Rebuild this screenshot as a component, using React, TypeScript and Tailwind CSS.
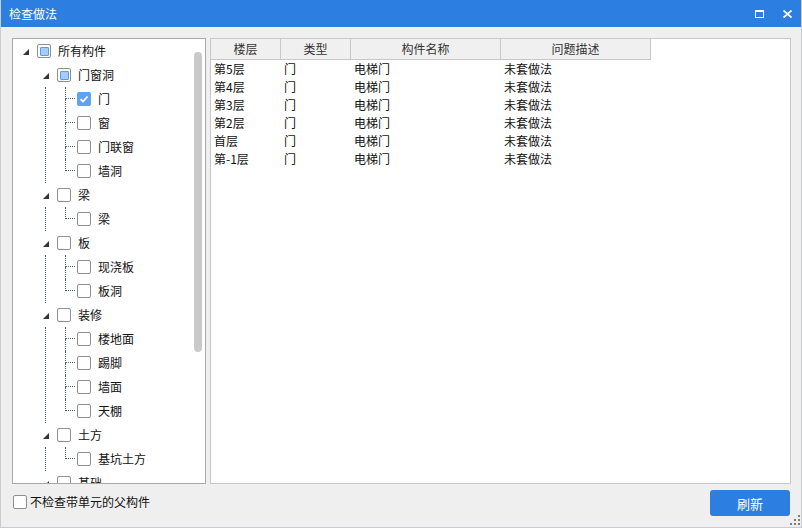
import React from "react";

type Node = { label: string; state?: "checked" | "partial" | "none"; children?: Node[] };

const groups: Node[] = [
  { label: "门窗洞", state: "partial", children: [
    { label: "门", state: "checked" },
    { label: "窗" },
    { label: "门联窗" },
    { label: "墙洞" },
  ] },
  { label: "梁", children: [{ label: "梁" }] },
  { label: "板", children: [{ label: "现浇板" }, { label: "板洞" }] },
  { label: "装修", children: [{ label: "楼地面" }, { label: "踢脚" }, { label: "墙面" }, { label: "天棚" }] },
  { label: "土方", children: [{ label: "基坑土方" }] },
  { label: "基础", children: [] },
];

const rows = [
  ["第5层", "门", "电梯门", "未套做法"],
  ["第4层", "门", "电梯门", "未套做法"],
  ["第3层", "门", "电梯门", "未套做法"],
  ["第2层", "门", "电梯门", "未套做法"],
  ["首层", "门", "电梯门", "未套做法"],
  ["第-1层", "门", "电梯门", "未套做法"],
];

function Check({ state = "none" }: { state?: "checked" | "partial" | "none" }) {
  if (state === "checked") {
    return (
      <div className="w-[14px] h-[14px] shrink-0 rounded-[2px] bg-[#5ea3f1] flex items-center justify-center">
        <svg width="10" height="10" viewBox="0 0 10 10">
          <path d="M1.5 5.2 L4 7.5 L8.5 2.5" fill="none" stroke="white" strokeWidth="1.8" />
        </svg>
      </div>
    );
  }
  if (state === "partial") {
    return (
      <div className="w-[14px] h-[14px] shrink-0 rounded-[2px] border border-[#8f8f8f] bg-white flex items-center justify-center">
        <div className="w-[9px] h-[9px] rounded-[1px] border border-[#5b9be6] bg-[#a4cdf8]" />
      </div>
    );
  }
  return <div className="w-[14px] h-[14px] shrink-0 rounded-[2px] border border-[#8f8f8f] bg-white" />;
}

function Tri() {
  return (
    <svg width="6" height="6" viewBox="0 0 6 6" className="block">
      <polygon points="6,0 6,6 0,6" fill="#333" />
    </svg>
  );
}

export default function App() {
  const font = { fontFamily: '"Noto Sans CJK SC", "Microsoft YaHei", sans-serif' };
  return (
    <div className="relative w-[802px] h-[528px] bg-[#efefef] flex flex-col border-x border-b border-[#c9ccd0] overflow-hidden text-[12px] text-[#111]" style={font}>
      {/* title bar */}
      <div className="h-[27px] shrink-0 bg-[#2c7fe0] flex items-center pl-[9px] -mx-px">
        <span className="text-white text-[12px] leading-none">检查做法</span>
        <div className="ml-auto flex items-center">
          <div className="w-[9px] h-[8px] border border-white border-t-2 mr-[19px]" />
          <svg width="9" height="8" viewBox="0 0 9 8" className="mr-[10px]">
            <path d="M0.5 0.5 L8.5 7.5 M8.5 0.5 L0.5 7.5" stroke="white" strokeWidth="1.7" />
          </svg>
        </div>
      </div>

      {/* panels */}
      <div className="flex pl-[11px] pr-[10px] pt-[11px] gap-[4px]">
        {/* tree */}
        <div className="w-[194px] h-[446px] border border-[#a9a9a9] bg-white flex overflow-hidden">
          <div className="flex-1 overflow-hidden">
            <div className="h-[24px] flex items-center">
              <div className="w-[24px] pl-[10px] pt-[1px]"><Tri /></div>
              <Check state="partial" />
              <span className="ml-[7px] leading-none">所有构件</span>
            </div>
            {groups.map((g, gi) => (
              <div key={gi}>
                <div className="h-[24px] flex items-center">
                  <div className="w-[44px] pl-[30px] pt-[1px]"><Tri /></div>
                  <Check state={g.state} />
                  <span className="ml-[7px] leading-none">{g.label}</span>
                </div>
                <div className="ml-[32px] border-l border-dotted border-[#4e6178]">
                  {g.children!.map((c, ci) => {
                    const last = ci === g.children!.length - 1;
                    return (
                      <div key={ci} className="h-[24px] flex items-center">
                        <div className="ml-[19px] w-[10px] h-full flex flex-col">
                          <div className="h-[12px] border-l border-b border-dotted border-[#4e6178]" />
                          <div className={"h-[12px] " + (last ? "" : "border-l border-dotted border-[#4e6178]")} />
                        </div>
                        <div className="ml-[2px]"><Check state={c.state} /></div>
                        <span className="ml-[7px] leading-none">{c.label}</span>
                      </div>
                    );
                  })}
                </div>
              </div>
            ))}
          </div>
          <div className="w-[8px] mr-[3px] shrink-0">
            <div className="mt-[13px] h-[300px] rounded-[4px] bg-[#c9c9c9]" />
          </div>
        </div>

        {/* table */}
        <div className="flex-1 h-[446px] border border-[#c8c8c8] bg-white overflow-hidden">
          <div className="flex h-[21px] border-b border-[#c8c8c8] w-[440px] bg-[#f0f0f0] text-[#333]">
            <div className="w-[70px] border-r border-[#c8c8c8] flex items-center justify-center leading-none">楼层</div>
            <div className="w-[70px] border-r border-[#c8c8c8] flex items-center justify-center leading-none">类型</div>
            <div className="w-[150px] border-r border-[#c8c8c8] flex items-center justify-center leading-none">构件名称</div>
            <div className="w-[150px] border-r border-[#c8c8c8] flex items-center justify-center leading-none">问题描述</div>
          </div>
          {rows.map((r, i) => (
            <div key={i} className="flex h-[18px] items-center leading-none">
              <div className="w-[70px] pl-[3px]">{r[0]}</div>
              <div className="w-[70px] pl-[3px]">{r[1]}</div>
              <div className="w-[150px] pl-[3px]">{r[2]}</div>
              <div className="w-[150px] pl-[3px]">{r[3]}</div>
            </div>
          ))}
        </div>
      </div>

      {/* bottom */}
      <div className="flex items-start pl-[12px] pr-[11px]">
        <div className="flex items-center mt-[11px]">
          <Check />
          <span className="ml-[3px] leading-none">不检查带单元的父构件</span>
        </div>
        <button className="ml-auto mt-[6px] w-[80px] h-[26px] rounded-[3px] bg-[#2c7fe0] text-white text-[13px] leading-none">刷新</button>
      </div>

      <svg width="10" height="10" viewBox="0 0 10 10" className="absolute right-[1px] bottom-[2px]">
        <rect x="8" y="0" width="2" height="2" fill="#7d7d7d" />
        <rect x="4" y="4" width="2" height="2" fill="#7d7d7d" />
        <rect x="8" y="4" width="2" height="2" fill="#7d7d7d" />
        <rect x="0" y="8" width="2" height="2" fill="#7d7d7d" />
        <rect x="4" y="8" width="2" height="2" fill="#7d7d7d" />
        <rect x="8" y="8" width="2" height="2" fill="#7d7d7d" />
      </svg>
    </div>
  );
}
